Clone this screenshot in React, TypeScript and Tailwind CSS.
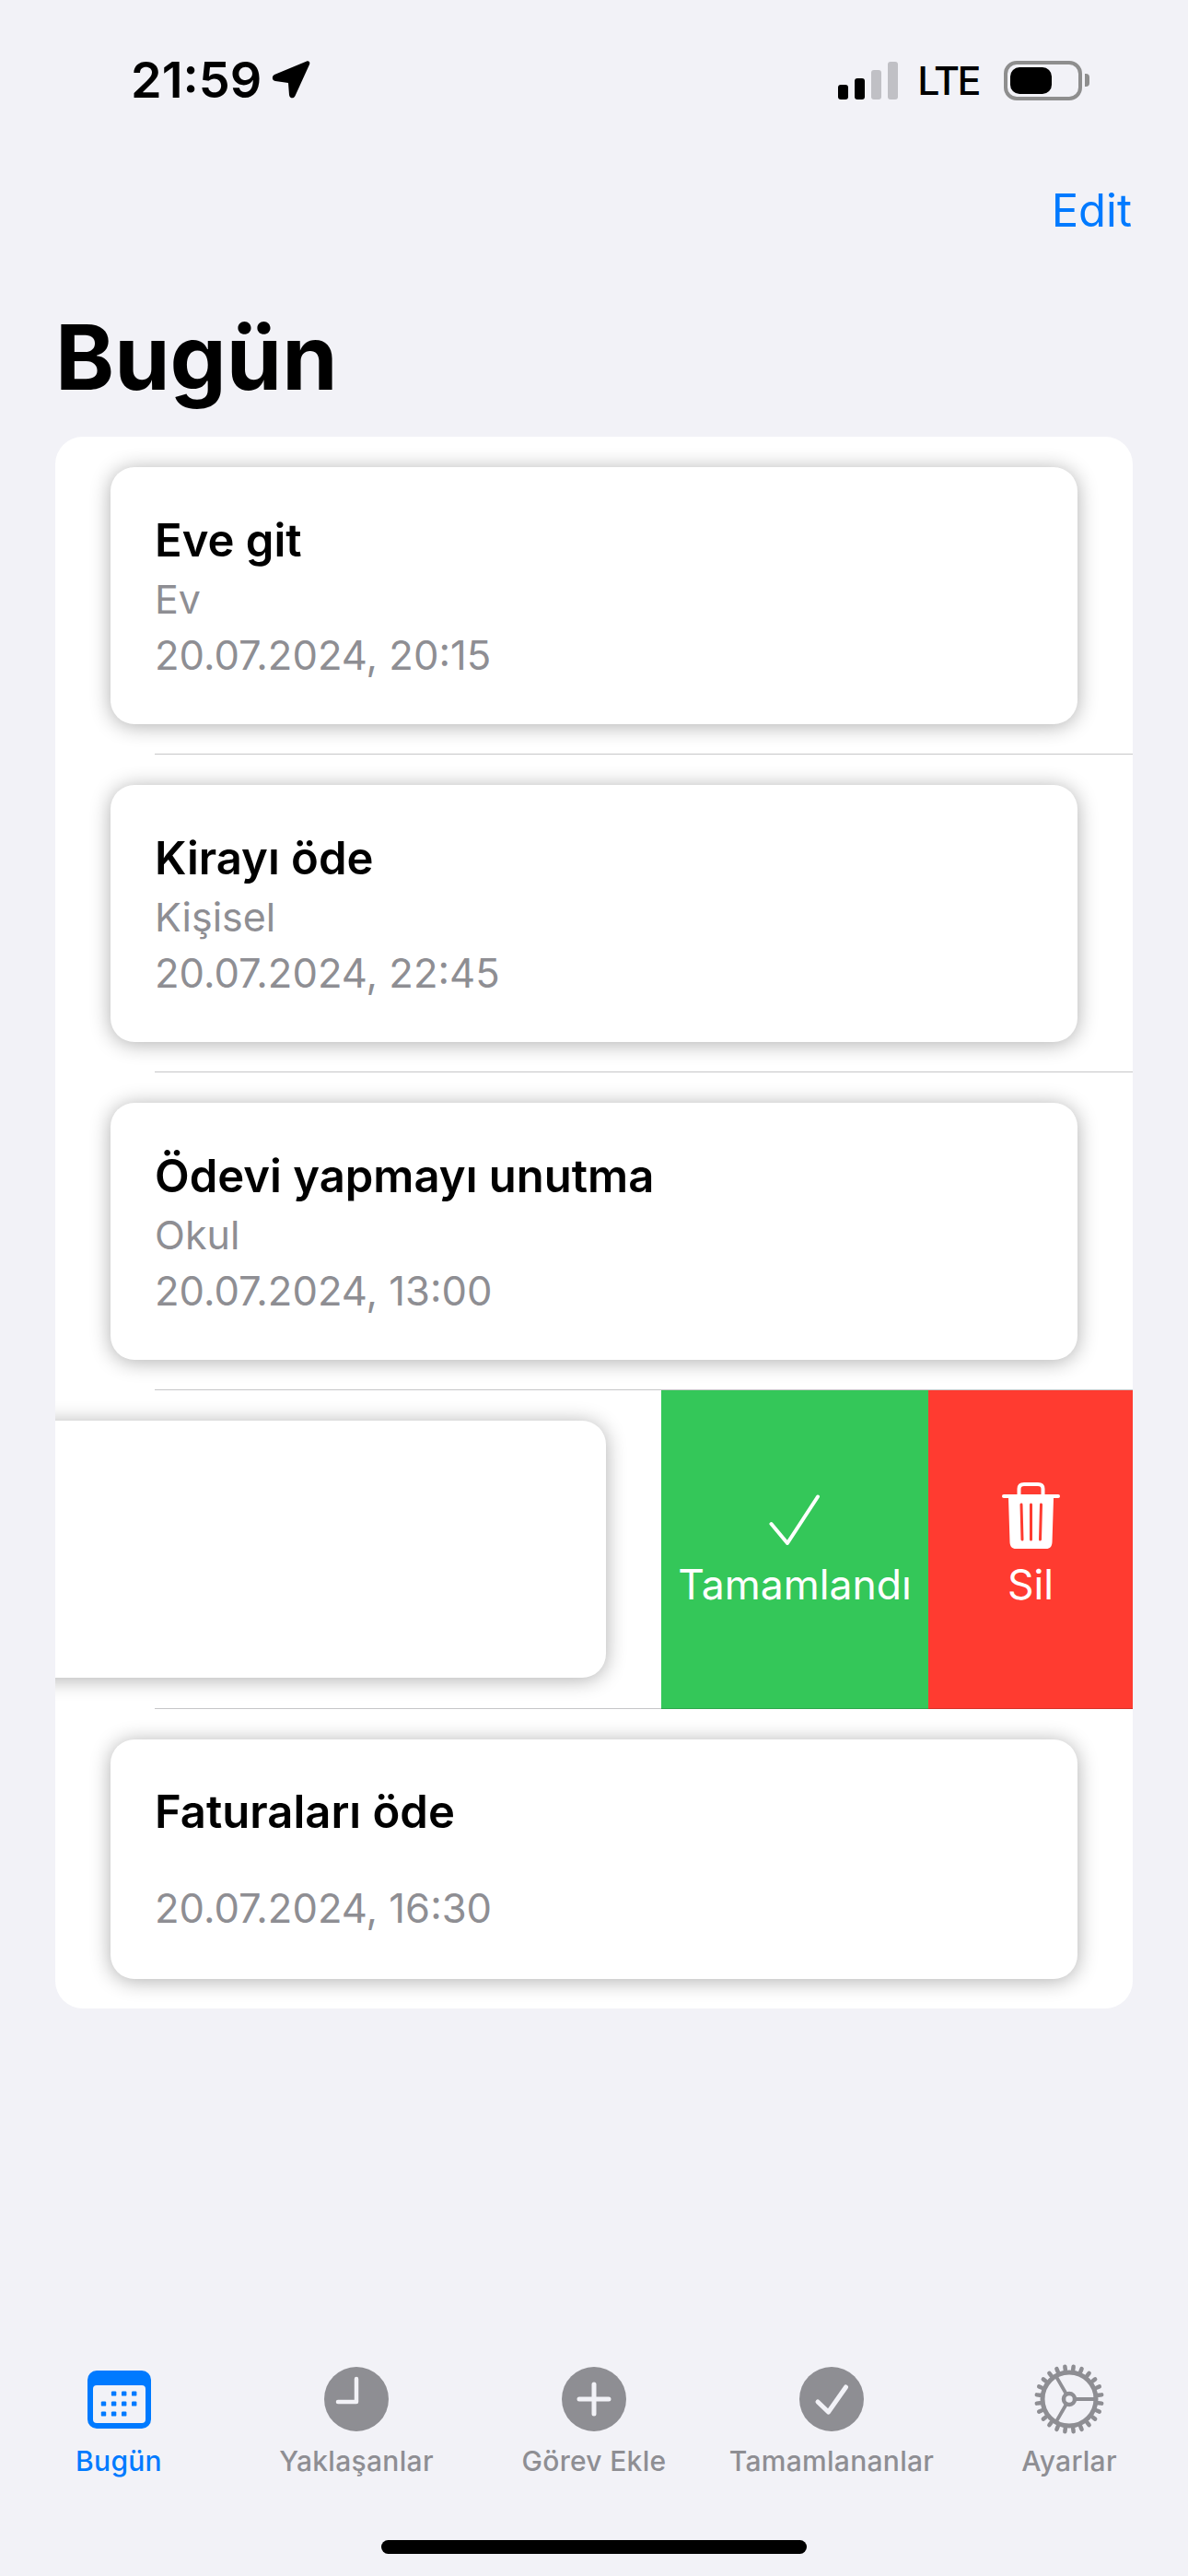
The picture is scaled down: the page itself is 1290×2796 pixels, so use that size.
const tasks = [
  { title: "Eve git", category: "Ev", date: "20.07.2024, 20:15" },
  { title: "Kirayı öde", category: "Kişisel", date: "20.07.2024, 22:45" },
  { title: "Ödevi yapmayı unutma", category: "Okul", date: "20.07.2024, 13:00" },
]

function TaskCard({ title, category, date }: { title: string; category?: string; date: string }) {
  return (
    <div className="flex h-[279px] flex-col rounded-[26px] bg-white pl-[48px] pt-[44px] shadow-[0_2px_22px_rgba(0,0,0,0.32)]">
      <div className="h-[68px] text-[49px] leading-[72px] font-semibold text-black">{title}</div>
      <div className="h-[62px] text-[43px] leading-[62px] text-[#8e8e93]">{category}</div>
      <div className="h-[62px] text-[43.6px] leading-[62px] text-[#8e8e93]">{date}</div>
    </div>
  )
}

function Separator() {
  return <div className="ml-[108px] h-px bg-[#c6c6c8]" />
}

function StatusBar() {
  return (
    <div className="flex h-[174px] items-center justify-between pr-[107px] pl-[142px]">
      <div className="flex items-center gap-[11px]">
        <span className="text-[54px] leading-none font-semibold text-black">21:59</span>
        <svg width="42" height="42" viewBox="0 0 42 42" className="mt-[-2px]">
          <path d="M38 1.5 L3 16 C0 17.5 0 22 4 23 L18 25 L19 38 C19.5 42 24 42.5 25.5 39 L41 5 C42 2.5 40.5 .5 38 1.5Z" fill="#000" />
        </svg>
      </div>
      <div className="flex items-center">
        <div className="flex h-[41px] items-end gap-[7px]">
          <div className="h-[16px] w-[11px] rounded-[3px] bg-black" />
          <div className="h-[23px] w-[11px] rounded-[3px] bg-black" />
          <div className="h-[32px] w-[11px] rounded-[3px] bg-[#c0c0c5]" />
          <div className="h-[41px] w-[11px] rounded-[3px] bg-[#c0c0c5]" />
        </div>
        <span className="ml-[21px] text-[43px] leading-none font-medium tracking-[-2.5px] text-black">LTE</span>
        <div className="ml-[27px] flex h-[43px] w-[85px] items-center rounded-[14px] border-[4px] border-[#8e8e8e] pl-[3px]">
          <div className="h-[29px] w-[45px] rounded-[10px] bg-black" />
        </div>
        <div className="ml-[3px] h-[14px] w-[5px] rounded-r-[4px] bg-[#8e8e8e]" />
      </div>
    </div>
  )
}

function CalendarIcon() {
  const dots = [
    [28.6, 25], [39.7, 25], [50.7, 25],
    [17.5, 36], [28.6, 36], [39.7, 36], [50.7, 36],
    [17.5, 47], [28.6, 47], [39.7, 47],
  ]
  return (
    <svg width="69" height="63" viewBox="0 0 69 63">
      <rect width="69" height="63" rx="10" fill="#007aff" />
      <rect x="6" y="16" width="57" height="41" rx="4" fill="#f2f2f7" />
      {dots.map(([x, y]) => (
        <rect key={`${x}-${y}`} x={x - 2.7} y={y - 2.6} width="5.4" height="5.2" rx="1.2" fill="#007aff" />
      ))}
    </svg>
  )
}

function ClockIcon() {
  return (
    <svg width="70" height="70" viewBox="0 0 70 70">
      <circle cx="35" cy="35" r="35" fill="#8e8e93" />
      <path d="M35 13 V38 H15" fill="none" stroke="#f2f2f7" strokeWidth="4.5" strokeLinecap="round" strokeLinejoin="round" />
    </svg>
  )
}

function PlusIcon() {
  return (
    <svg width="70" height="70" viewBox="0 0 70 70">
      <circle cx="35" cy="35" r="35" fill="#8e8e93" />
      <path d="M35 19 V51 M19 35 H51" fill="none" stroke="#f2f2f7" strokeWidth="5" strokeLinecap="round" />
    </svg>
  )
}

function CheckCircleIcon() {
  return (
    <svg width="70" height="70" viewBox="0 0 70 70">
      <circle cx="35" cy="35" r="35" fill="#8e8e93" />
      <path d="M20 38 L31.5 49 L50.5 22" fill="none" stroke="#f2f2f7" strokeWidth="5" strokeLinecap="round" strokeLinejoin="round" />
    </svg>
  )
}

function GearIcon() {
  const teeth = Array.from({ length: 24 }, (_, i) => (i * 360) / 24 + 7.5)
  return (
    <svg width="76" height="76" viewBox="0 0 76 76">
      <g stroke="#8e8e93" fill="none" strokeLinecap="round">
        {teeth.map((a) => (
          <line key={a} x1="38" y1="6" x2="38" y2="2.5" strokeWidth="4.5" transform={`rotate(${a} 38 38)`} />
        ))}
        <circle cx="38" cy="38" r="29" strokeWidth="5" />
        <circle cx="38" cy="38" r="6" strokeWidth="4.5" />
        <path d="M44 38 H67 M35 32.8 L23.5 12.9 M35 43.2 L23.5 63.1" strokeWidth="3.8" />
      </g>
    </svg>
  )
}

function TrashIcon() {
  return (
    <svg width="63" height="72" viewBox="0 0 63 72">
      <path d="M18.5 15 V7 C18.5 3.5 20.5 2 24 2 H39 C42.5 2 44.5 3.5 44.5 7 V15" fill="none" stroke="#fff" strokeWidth="4" />
      <path d="M2 15 H61" stroke="#fff" strokeWidth="4" strokeLinecap="round" />
      <path d="M7 17 H56 L54.5 65 C54.3 69.5 52 72 48 72 H15 C11 72 8.7 69.5 8.5 65 Z" fill="#fff" />
      <path d="M21 24 L22 62 M31.5 24 V62 M42.5 24 L41.5 62" stroke="#ff3b30" strokeWidth="3" strokeLinecap="round" />
    </svg>
  )
}

const tabs = [
  { label: "Bugün", icon: <CalendarIcon />, active: true },
  { label: "Yaklaşanlar", icon: <ClockIcon /> },
  { label: "Görev Ekle", icon: <PlusIcon /> },
  { label: "Tamamlananlar", icon: <CheckCircleIcon /> },
  { label: "Ayarlar", icon: <GearIcon /> },
]

export default function App() {
  return (
    <div className="flex h-[2796px] w-[1290px] flex-col overflow-hidden bg-[#f2f2f7] font-['Inter',sans-serif]">
      <StatusBar />

      {/* Nav bar */}
      <div className="flex h-[108px] items-center justify-end pr-[61px]">
        <span className="text-[49px] leading-none text-[#007aff]">Edit</span>
      </div>
      <div className="flex h-[192px] items-start pl-[60px]">
        <h1 className="mt-[44px] text-[97px] leading-[124px] font-bold text-black">Bugün</h1>
      </div>

      {/* Task list */}
      <div className="mx-[60px] overflow-hidden rounded-[30px] bg-white">
        {tasks.map((t) => (
          <div key={t.title}>
            <div className="px-[60px] pt-[33px] pb-[32px]">
              <TaskCard title={t.title} category={t.category} date={t.date} />
            </div>
            <Separator />
          </div>
        ))}

        {/* Swiped row */}
        <div className="flex h-[345px]">
          <div className="flex-1 pt-[33px]">
            <div className="ml-[-452px] w-[1050px]">
              <TaskCard title="" category="" date="" />
            </div>
          </div>
          <div className="flex w-[290px] flex-col items-center bg-[#34c759] pt-[113px] text-white">
            <svg width="56" height="56" viewBox="0 0 56 56">
              <path d="M2.5 32 L20 53 L53 2.5" fill="none" stroke="#fff" strokeWidth="4" strokeLinecap="round" strokeLinejoin="round" />
            </svg>
            <span className="mt-[12px] text-[44.5px] leading-[60px]">Tamamlandı</span>
          </div>
          <div className="flex w-[222px] flex-col items-center bg-[#ff3b30] pt-[100px] text-white">
            <TrashIcon />
            <span className="mt-[9px] text-[44.5px] leading-[60px]">Sil</span>
          </div>
        </div>
        <div className="ml-[108px] flex h-px justify-end bg-[#c6c6c8]">
          <div className="w-[290px] bg-[#2da64b]" />
          <div className="w-[222px] bg-[#d63329]" />
        </div>

        <div className="px-[60px] pt-[33px] pb-[32px]">
          <div className="flex h-[260px] flex-col rounded-[26px] bg-white pl-[48px] pt-[43px] shadow-[0_2px_22px_rgba(0,0,0,0.32)]">
            <div className="h-[68px] text-[49px] leading-[72px] font-semibold text-black">Faturaları öde</div>
            <div className="mt-[42px] h-[62px] text-[43.6px] leading-[62px] text-[#8e8e93]">20.07.2024, 16:30</div>
          </div>
        </div>
      </div>

      {/* Tab bar */}
      <div className="mt-auto flex">
        {tabs.map((tab) => (
          <div key={tab.label} className="flex w-[258px] flex-col items-center">
            <div className="flex h-[76px] items-center justify-center">{tab.icon}</div>
            <span className={`mt-[9px] text-[30px] leading-[40px] font-medium tracking-[0.3px] ${tab.active ? "text-[#007aff]" : "text-[#8e8e93]"}`}>
              {tab.label}
            </span>
          </div>
        ))}
      </div>
      <div className="mt-[66px] mb-[24px] flex justify-center">
        <div className="h-[15px] w-[462px] rounded-full bg-black" />
      </div>
    </div>
  )
}
